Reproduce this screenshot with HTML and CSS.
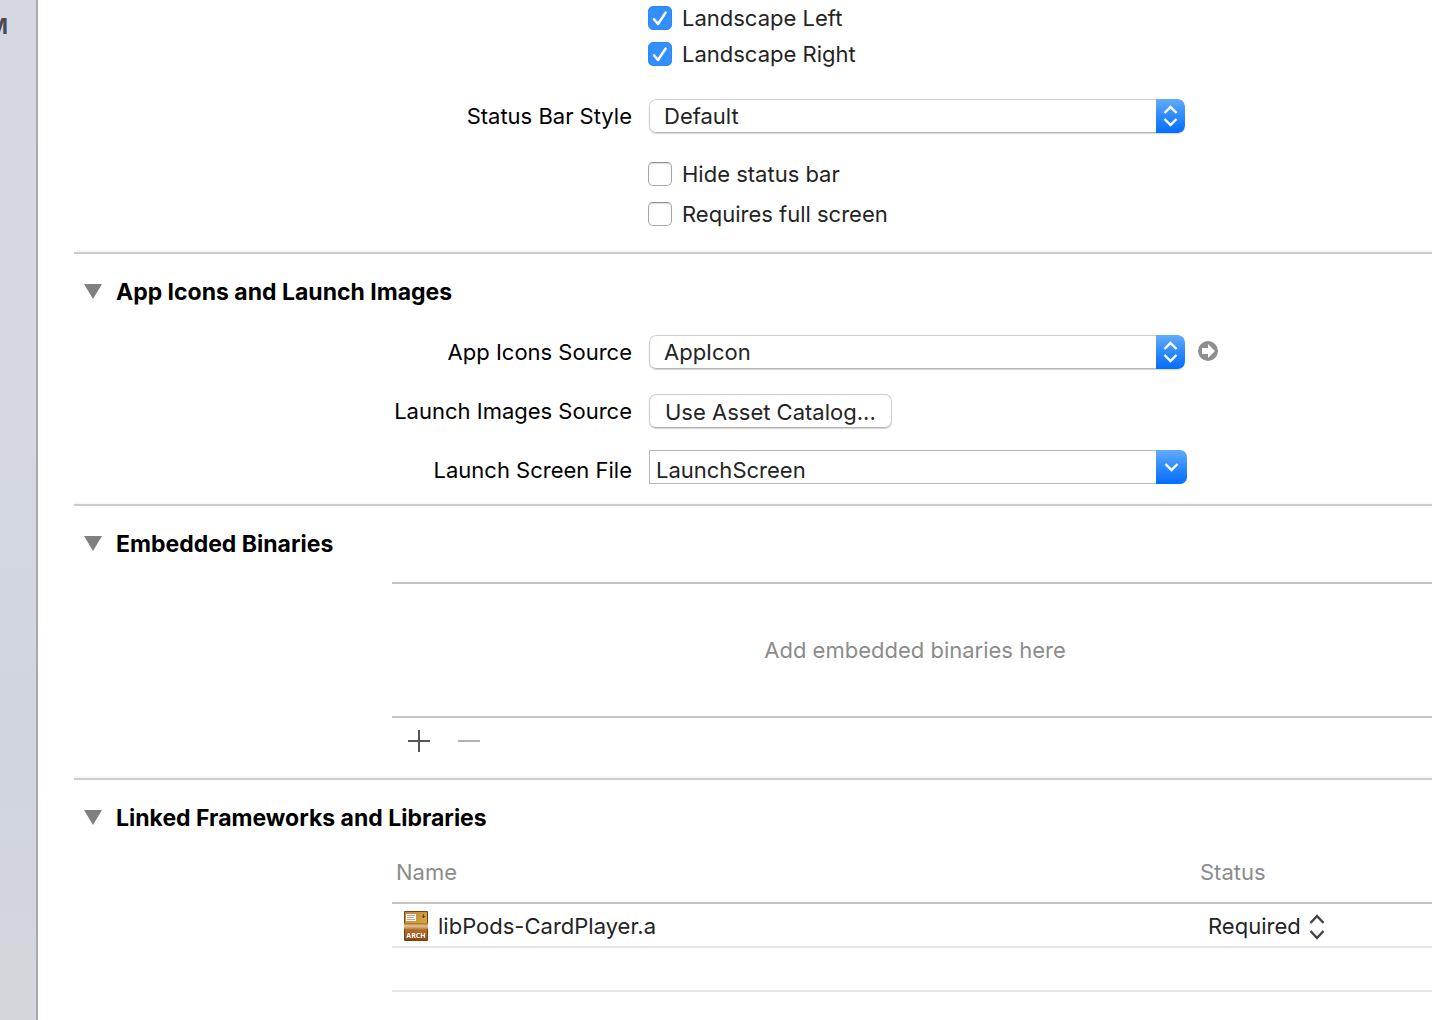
FILE: index.html
```html
<!DOCTYPE html>
<html lang="en">
<head>
<meta charset="utf-8">
<meta name="viewport" content="width=device-width, initial-scale=1">
<title>CardPlayer - General</title>
<link rel="stylesheet" href="styles.css">
</head>
<body>
<div class="window">
  <aside class="navigator"><span class="scm-badge">M</span></aside>
  <main class="editor">
    <section class="section deployment">
      <div class="checks tight">
        <label class="check"><span class="box"><input type="checkbox" checked><svg viewBox="0 0 24 24"><path d="M6 13.2 10 18 17.6 6.6"/></svg></span>Landscape Left</label>
        <label class="check"><span class="box"><input type="checkbox" checked><svg viewBox="0 0 24 24"><path d="M6 13.2 10 18 17.6 6.6"/></svg></span>Landscape Right</label>
      </div>
      <div class="row status-style">
        <label class="name" for="bar-style">Status Bar Style</label>
        <div class="popup">
          <select id="bar-style"><option>Default</option></select>
          <span class="cap"><svg width="29" height="34" viewBox="0 0 29 34"><path d="M8.500 14 14.500 8 20.500 14M8.500 20 14.500 26 20.500 20"/></svg></span>
        </div>
      </div>
      <div class="checks">
        <label class="check"><span class="box"><input type="checkbox"></span>Hide status bar</label>
        <label class="check"><span class="box"><input type="checkbox"></span>Requires full screen</label>
      </div>
    </section>

    <section class="section images">
      <header class="title">
        <button class="disclosure" aria-label="Toggle App Icons and Launch Images"><svg width="18" height="16" viewBox="0 0 18 16"><path d="M0 0H18L9 15Z"/></svg></button>
        <h2>App Icons and Launch Images</h2>
      </header>
      <div class="row">
        <label class="name" for="icons">App Icons Source</label>
        <div class="popup">
          <select id="icons"><option>AppIcon</option></select>
          <span class="cap"><svg width="29" height="34" viewBox="0 0 29 34"><path d="M8.500 14 14.500 8 20.500 14M8.500 20 14.500 26 20.500 20"/></svg></span>
        </div>
        <button class="jump" aria-label="Show in asset catalog"><svg width="20" height="22" viewBox="0 0 20 22"><circle cx="10" cy="10" r="10" fill="#8e8e8e"/><path d="M4 7H10V3L17 10 10 17V13H4Z" fill="#fff"/></svg></button>
      </div>
      <div class="row">
        <label class="name" for="launch">Launch Images Source</label>
        <button class="push" id="launch">Use Asset Catalog...</button>
      </div>
      <div class="row low">
        <label class="name" for="screen">Launch Screen File</label>
        <div class="combo">
          <input id="screen" type="text" value="LaunchScreen">
          <button class="cap" aria-label="Show files"><svg width="31" height="34" viewBox="0 0 31 34"><path d="M9.500 14 15.500 20 21.500 14"/></svg></button>
        </div>
      </div>
    </section>

    <section class="section embedded">
      <header class="title">
        <button class="disclosure" aria-label="Toggle Embedded Binaries"><svg width="18" height="16" viewBox="0 0 18 16"><path d="M0 0H18L9 15Z"/></svg></button>
        <h2>Embedded Binaries</h2>
      </header>
      <div class="list">
        <p class="empty">Add embedded binaries here</p>
        <div class="tools">
          <button aria-label="Add"><svg width="22" height="22" viewBox="0 0 22 22"><path d="M0 11H22M11 0V22" stroke="#555" stroke-width="2"/></svg></button>
          <button aria-label="Remove" disabled><svg width="22" height="22" viewBox="0 0 22 22"><path d="M0 11H22" stroke="#b2b2b2" stroke-width="2"/></svg></button>
        </div>
      </div>
    </section>

    <section class="section linked">
      <header class="title">
        <button class="disclosure" aria-label="Toggle Linked Frameworks and Libraries"><svg width="18" height="16" viewBox="0 0 18 16"><path d="M0 0H18L9 15Z"/></svg></button>
        <h2>Linked Frameworks and Libraries</h2>
      </header>
      <div class="list">
        <table class="libraries">
          <colgroup><col><col class="status-col"></colgroup>
          <thead><tr><th>Name</th><th>Status</th></tr></thead>
          <tbody>
            <tr>
              <td><div class="file">
                <svg width="26" height="32" viewBox="0 0 26 32">
                  <defs>
                    <linearGradient id="lid" x1="0" y1="0" x2="1" y2="1"><stop offset="0" stop-color="#c08a38"/><stop offset="1" stop-color="#d3a840"/></linearGradient>
                    <linearGradient id="front" x1="0" y1="0" x2="0" y2="1"><stop offset="0" stop-color="#b77427"/><stop offset="1" stop-color="#8c4614"/></linearGradient>
                    <linearGradient id="tape" x1="0" y1="0" x2="0" y2="1"><stop offset="0" stop-color="#a46b29"/><stop offset=".5" stop-color="#e6c590"/><stop offset="1" stop-color="#b58345"/></linearGradient>
                  </defs>
                  <rect x="1" y="1" width="24" height="30" rx="1" fill="#74420f"/>
                  <rect x="2" y="2" width="22" height="11" fill="url(#lid)"/>
                  <rect x="1" y="13" width="24" height="6" fill="url(#tape)"/>
                  <rect x="2" y="19" width="22" height="11" fill="url(#front)"/>
                  <rect x="3" y="4" width="10" height="7" fill="#f8f5ef"/>
                  <path d="M4 5.500H12M4 7.500H11M4 9.500H12" stroke="#b4aaa0"/>
                  <path d="M20.500 4V8M19 6.500H22" stroke="#694617"/>
                  <text x="13" y="28" text-anchor="middle" class="arch">ARCH</text>
                </svg>
                <span>libPods-CardPlayer.a</span>
              </div></td>
              <td><div class="requirement">
                <select aria-label="Status"><option>Required</option></select>
                <svg width="16" height="30" viewBox="0 0 16 30"><path d="M1.500 12 8 5 14.500 12M1.500 20 8 27 14.500 20"/></svg>
              </div></td>
            </tr>
            <tr><td></td><td></td></tr>
          </tbody>
        </table>
      </div>
    </section>
  </main>
</div>
</body>
</html>
```

FILE: styles.css
```css
* {
  box-sizing: border-box;
}

body {
  margin: 0;
  background: #fff;
  color: #242424;
  font: 22px/28px Inter, "Liberation Sans", sans-serif;
}

button,
input,
select {
  margin: 0;
  padding: 0;
  border: 0;
  background: none;
  color: inherit;
  font: inherit;
  appearance: none;
}

svg {
  display: block;
  flex: none;
}

.window {
  display: flex;
  min-height: 100vh;
}

.navigator {
  display: flex;
  flex: none;
  justify-content: flex-end;
  width: 38px;
  padding: 12px 28px 0 0;
  overflow: hidden;
  border-right: 2px solid #a8a8a8;
  background: linear-gradient(#d5d8e0, #d5d8df 35%, #d1d5de 70%, #d3d6da);
}

.scm-badge {
  color: #4a4b55;
  font-weight: 700;
}

.editor {
  flex: 1;
  min-width: 0;
  padding-left: 36px;
}

.section {
  padding-top: 24px;
  border-bottom: 2px solid #ccc;
  box-shadow: inset 0 -2px #f7f7f7;
}

.deployment {
  padding: 4px 0 24px;
}

.images {
  padding-bottom: 20px;
}

.embedded {
  padding-bottom: 26px;
}

.linked {
  border: 0;
  box-shadow: none;
}

.title {
  display: flex;
  align-items: center;
  gap: 14px;
  padding-left: 10px;
  color: #000;
}

.title h2 {
  margin: 0;
  font-size: 23px;
  font-weight: 700;
}

.disclosure {
  fill: #808080;
}

.row {
  display: flex;
  align-items: center;
  height: 34px;
}

.row.low {
  align-items: flex-end;
}

.images .row {
  margin-top: 25px;
}

.images .title + .row {
  margin-top: 29px;
}

.images .row.low {
  margin-top: 22px;
}

.name {
  flex: none;
  width: 558px;
  margin-right: 17px;
  color: #000;
  text-align: right;
}

.checks {
  display: flex;
  flex-direction: column;
  align-items: flex-start;
  gap: 12px;
  padding-left: 574px;
}

.checks.tight {
  gap: 8px;
}

.check {
  display: flex;
  align-items: center;
  gap: 10px;
}

.box {
  display: grid;
}

.box > * {
  grid-area: 1 / 1;
  width: 24px;
  height: 24px;
}

.box input {
  border: 1px solid #a9a9a9;
  border-top-color: #8e8e8e;
  border-radius: 5px;
  box-shadow: inset 0 1px 2px #ddd;
}

.box input:checked {
  border-color: #2f86f6;
  background: #338ffc;
  box-shadow: none;
}

.box svg {
  fill: none;
  stroke: #fff;
  stroke-width: 2.5;
  stroke-linecap: round;
  stroke-linejoin: round;
  pointer-events: none;
}

.status-style {
  margin: 31px 0 27px;
}

.popup,
.combo {
  display: flex;
  flex: 0 1 536px;
  height: 34px;
}

.popup {
  overflow: hidden;
  border-radius: 7px;
  box-shadow: 0 1px 1px #d4d4d4;
}

.popup select {
  flex: 1;
  min-width: 0;
  padding-left: 14px;
  border: 1px solid #ccc;
  border-right: 0;
  border-bottom-color: #b5b5b5;
  border-radius: 7px 0 0 7px;
}

.combo {
  flex-basis: 538px;
}

.combo input {
  flex: 1;
  min-width: 0;
  padding: 6px 0 0 6px;
  border: 1px solid #b8b8b8;
  border-right: 0;
}

.cap {
  flex: none;
  background: linear-gradient(#63abf9, #2e8bfc 50%, #046dff);
  border-radius: 0 7px 7px 0;
  pointer-events: none;
}

.cap svg {
  fill: none;
  stroke: #fff;
  stroke-width: 2.4;
}

.jump {
  margin-left: 13px;
}

.push {
  height: 34px;
  padding: 2px 15px 0;
  border: 1px solid #ccc;
  border-bottom-color: #b5b5b5;
  border-radius: 7px;
  box-shadow: 0 1px 1px #d4d4d4;
}

.list {
  margin-left: 318px;
}

.embedded .list {
  margin-top: 24px;
}

.empty {
  display: flex;
  align-items: center;
  justify-content: center;
  height: 136px;
  margin: 0;
  padding-left: 6px;
  border: solid #c4c4c4;
  border-width: 2px 0;
  color: #8c8c8c;
}

.tools {
  display: flex;
  gap: 28px;
  padding: 12px 16px 0;
}

.libraries {
  width: 100%;
  border-spacing: 0;
  table-layout: fixed;
}

.status-col {
  width: 236px;
}

.libraries th {
  height: 72px;
  padding: 10px 4px 0;
  border-bottom: 2px solid #c4c4c4;
  color: #8c8c8c;
  font-weight: 400;
  text-align: left;
}

.libraries td {
  height: 44px;
  padding: 2px 0 0;
  border-bottom: 2px solid #e6e6e6;
}

.file,
.requirement {
  display: flex;
  align-items: center;
  gap: 9px;
  padding-left: 11px;
}

.requirement {
  gap: 8px;
  padding-left: 12px;
}

.requirement svg {
  fill: none;
  stroke: #444;
  stroke-width: 2.4;
}

.arch {
  fill: #fff;
  font: 700 7px "Open Sans", sans-serif;
}
```
